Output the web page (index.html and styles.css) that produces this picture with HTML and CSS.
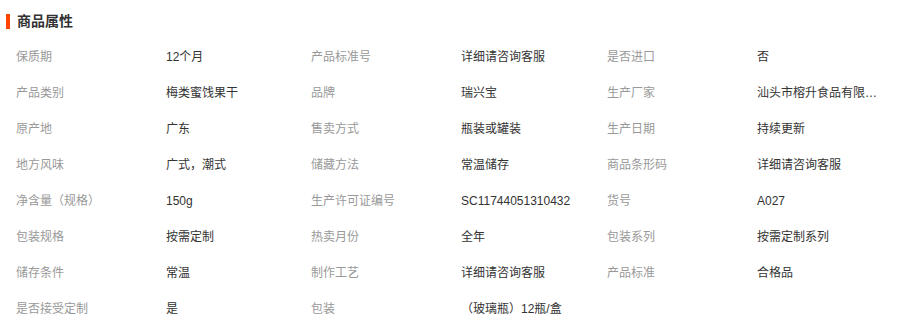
FILE: index.html
```html
<!DOCTYPE html>
<html lang="zh-CN">
<head>
<meta charset="utf-8">
<title>商品属性</title>
<link rel="stylesheet" href="styles.css">
</head>
<body>
<div class="attrs">
  <div class="attrs-head">
    <span class="bar"></span>
    <h3 class="title">商品属性</h3>
  </div>
  <div class="grid">
    <div class="k">保质期</div><div class="v">12个月</div>
    <div class="k">产品标准号</div><div class="v">详细请咨询客服</div>
    <div class="k">是否进口</div><div class="v">否</div>

    <div class="k">产品类别</div><div class="v">梅类蜜饯果干</div>
    <div class="k">品牌</div><div class="v">瑞兴宝</div>
    <div class="k">生产厂家</div><div class="v">汕头市榕升食品有限公司</div>

    <div class="k">原产地</div><div class="v">广东</div>
    <div class="k">售卖方式</div><div class="v">瓶装或罐装</div>
    <div class="k">生产日期</div><div class="v">持续更新</div>

    <div class="k">地方风味</div><div class="v">广式，潮式</div>
    <div class="k">储藏方法</div><div class="v">常温储存</div>
    <div class="k">商品条形码</div><div class="v">详细请咨询客服</div>

    <div class="k">净含量（规格）</div><div class="v">150g</div>
    <div class="k">生产许可证编号</div><div class="v">SC11744051310432</div>
    <div class="k">货号</div><div class="v">A027</div>

    <div class="k">包装规格</div><div class="v">按需定制</div>
    <div class="k">热卖月份</div><div class="v">全年</div>
    <div class="k">包装系列</div><div class="v">按需定制系列</div>

    <div class="k">储存条件</div><div class="v">常温</div>
    <div class="k">制作工艺</div><div class="v">详细请咨询客服</div>
    <div class="k">产品标准</div><div class="v">合格品</div>

    <div class="k">是否接受定制</div><div class="v">是</div>
    <div class="k">包装</div><div class="v">（玻璃瓶）12瓶/盒</div>
  </div>
</div>
</body>
</html>
```

FILE: styles.css
```css
html, body {
  margin: 0;
  padding: 0;
  background: #fff;
}

body {
  font-family: "Liberation Sans", "Noto Sans CJK SC", sans-serif;
  font-size: 12px;
  color: #333;
}

.attrs {
  width: 886px;
  padding-left: 6px;
}

.attrs-head {
  display: flex;
  align-items: center;
  height: 34px;
  padding-top: 4px;
  gap: 7px;
}

.bar {
  width: 4px;
  height: 15px;
  background: #ff4400;
}

.title {
  margin: 0;
  font-size: 14px;
  font-weight: bold;
  color: #333;
  line-height: 20px;
}

.grid {
  display: grid;
  grid-template-columns: 150px 145px 150px 146px 150px 145px;
  grid-auto-rows: 36px;
  padding-top: 1px;
}

.k, .v {
  padding: 0 10px;
  line-height: 36px;
  white-space: nowrap;
  overflow: hidden;
}

.k {
  color: #999;
}

.v {
  color: #333;
  text-overflow: ellipsis;
}
```
